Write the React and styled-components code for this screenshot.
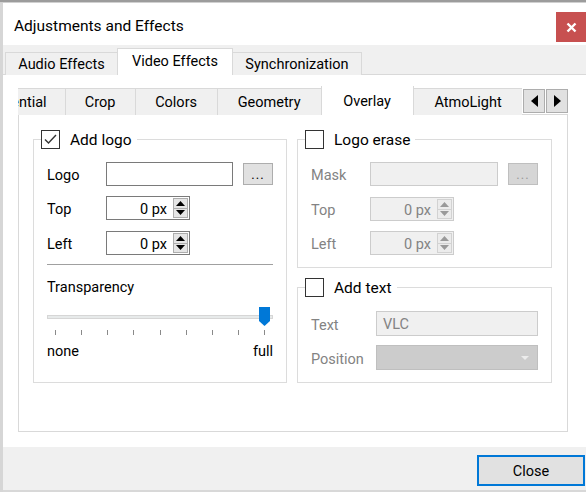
import styled, { createGlobalStyle } from "styled-components";

const FONT = `Roboto, "Open Sans", "Noto Sans", sans-serif`;

const GlobalStyle = createGlobalStyle`
  html, body {
    margin: 0;
    padding: 0;
    background: #f0f0f0;
  }
  body {
    font-family: ${FONT};
    font-size: 14.5px;
    color: #000;
  }
`;

const Page = styled.div`
  width: 586px;
  height: 492px;
  overflow: hidden;
  display: flex;
  flex-direction: column;
  background: #f0f0f0;
`;

const TopStrip = styled.div`
  height: 3px;
  flex: none;
  background: #9c9c9c;
  border-bottom: 1px solid #d0d0d0;
  box-sizing: border-box;
`;

const Window = styled.div`
  flex: 1;
  display: flex;
  flex-direction: column;
  border-left: 3px solid #d6d6d6;
  min-height: 0;
`;

const TitleBar = styled.div`
  height: 42px;
  flex: none;
  background: #fff;
  display: flex;
  align-items: flex-start;
`;

const Title = styled.div`
  font-size: 15.5px;
  padding: 11px 0 0 11px;
  line-height: 24px;
`;

const CloseX = styled.div`
  margin: 9px 0 0 auto;
  width: 30px;
  height: 30px;
  background: #c75050;
  display: flex;
  align-items: center;
  justify-content: center;
`;

const Body = styled.div`
  flex: 1;
  display: flex;
  flex-direction: column;
  background: #f0f0f0;
`;

const TabBar = styled.div`
  height: 30px;
  flex: none;
  display: flex;
  align-items: flex-end;
  padding-left: 3px;
`;

const Tab = styled.div`
  box-sizing: border-box;
  height: ${({ $active }) => ($active ? 27 : 23)}px;
  ${({ $w }) => ($w ? `width: ${$w}px;` : "padding: 0 18px;")}
  padding-top: ${({ $active }) => ($active ? 0 : 2)}px;
  display: flex;
  align-items: center;
  justify-content: center;
  line-height: 20px;
  background: ${({ $active }) => ($active ? "#fff" : "#f0f0f0")};
  border: 1px solid #d9d9d9;
  border-bottom: none;
  margin-left: -1px;
  position: relative;
  z-index: ${({ $active }) => ($active ? 1 : 0)};
  white-space: nowrap;
  flex: none;
`;

const TabPane = styled.div`
  height: 373px;
  box-sizing: border-box;
  background: #fff;
  border-top: 1px solid #d9d9d9;
  margin-top: -1px;
  padding: 11px 0 0 15px;
  display: flex;
  flex-direction: column;
`;

const InnerTabBar = styled.div`
  width: 550px;
  height: 29px;
  display: flex;
  align-items: flex-end;
`;

const TabScroller = styled.div`
  flex: 1;
  min-width: 0;
  overflow: hidden;
  height: 100%;
  display: flex;
  align-items: flex-end;
`;

const InnerTabRow = styled.div`
  display: flex;
  align-items: flex-end;
  margin-left: ${({ $offset }) => -$offset}px;
`;

const InnerTab = styled(Tab)`
  height: ${({ $active }) => ($active ? 30 : 27)}px;
  padding-top: 2px;
`;

const ArrowBtn = styled.div`
  width: 22px;
  height: 24px;
  box-sizing: border-box;
  margin: 0 0 2px 1px;
  background: #e1e1e1;
  border: 1px solid #adadad;
  display: flex;
  align-items: center;
  justify-content: center;
  flex: none;
`;

const InnerPane = styled.div`
  width: 550px;
  height: 318px;
  box-sizing: border-box;
  border: 1px solid #d9d9d9;
  margin-top: -1px;
  padding: 15px 15px 0 14px;
  display: grid;
  grid-template-columns: 254px 255px;
  column-gap: 10px;
  align-items: start;
`;

const Column = styled.div`
  display: flex;
  flex-direction: column;
  gap: 10px;
`;

const Group = styled.fieldset`
  margin: 0;
  padding: 0 13px;
  border: 1px solid #dcdcdc;
  min-width: 0;
  box-sizing: border-box;
  height: ${({ $h }) => $h}px;
`;

const Legend = styled.legend`
  padding: 0 5px 0 0;
  margin-left: -6px;
  display: flex;
  align-items: center;
  gap: 10px;
  height: 19px;
  line-height: 19px;
`;

const Box = styled.span`
  width: 19px;
  height: 19px;
  box-sizing: border-box;
  border: 1px solid #333;
  background: #fff;
  display: inline-flex;
  align-items: center;
  justify-content: center;
`;

const LegendText = styled.span`
  font-size: 15.5px;
  padding-top: 2px;
`;

const Content = styled.div`
  padding-top: ${({ $top }) => $top ?? 13}px;
  display: flex;
  flex-direction: column;
`;

const Row = styled.div`
  display: flex;
  align-items: center;
  height: ${({ $h }) => $h ?? 24}px;
  margin-bottom: ${({ $gap }) => $gap ?? 10}px;
`;

const Label = styled.span`
  width: ${({ $w }) => $w ?? 59}px;
  flex: none;
  padding-top: 3px;
  color: ${({ $disabled }) => ($disabled ? "#838383" : "#000")};
`;

const TextInput = styled.div`
  width: ${({ $w }) => $w}px;
  height: ${({ $h }) => $h ?? 24}px;
  box-sizing: border-box;
  border: 1px solid ${({ $disabled }) => ($disabled ? "#cccccc" : "#7a7a7a")};
  background: ${({ $disabled }) => ($disabled ? "#f0f0f0" : "#fff")};
  color: #838383;
  padding: 2px 0 0 6px;
  display: flex;
  align-items: center;
`;

const DotsBtn = styled.div`
  width: 30px;
  height: 22px;
  box-sizing: border-box;
  margin-left: 10px;
  background: ${({ $disabled }) => ($disabled ? "#d6d6d6" : "#e1e1e1")};
  border: 1px solid ${({ $disabled }) => ($disabled ? "#bfbfbf" : "#adadad")};
  color: ${({ $disabled }) => ($disabled ? "#9a9a9a" : "#000")};
  font-size: 13px;
  line-height: 14px;
  display: flex;
  align-items: center;
  justify-content: center;
  letter-spacing: 1px;
  padding-top: 2px;
`;

const Spin = styled.div`
  width: 84px;
  height: 24px;
  box-sizing: border-box;
  border: 1px solid ${({ $disabled }) => ($disabled ? "#cccccc" : "#7a7a7a")};
  background: ${({ $disabled }) => ($disabled ? "#f0f0f0" : "#fff")};
  color: ${({ $disabled }) => ($disabled ? "#838383" : "#000")};
  display: flex;
  align-items: center;
`;

const SpinValue = styled.span`
  flex: 1;
  text-align: right;
  padding: 3px 6px 0 0;
`;

const SpinButtons = styled.div`
  width: 15px;
  height: 20px;
  margin-right: 1px;
  display: flex;
  flex-direction: column;
`;

const SpinArrow = styled.div`
  flex: 1;
  box-sizing: border-box;
  border: 1px solid ${({ $disabled }) => ($disabled ? "#d2d2d2" : "#adadad")};
  background: ${({ $disabled }) => ($disabled ? "#ececec" : "#e5e5e5")};
  display: flex;
  align-items: center;
  justify-content: center;
  & + & {
    margin-top: -1px;
  }
`;

const Separator = styled.div`
  height: 1px;
  background: #a0a0a0;
  margin: -1px 0 13px;
`;

const Caption = styled.div`
  line-height: 20px;
`;

const SliderArea = styled.div`
  position: relative;
  height: 36px;
  margin-top: 5px;
`;

const Track = styled.div`
  position: absolute;
  left: 0;
  right: 0;
  top: 12px;
  height: 4px;
  box-sizing: border-box;
  background: #e7eaea;
  border: 1px solid #d6d6d6;
`;

const Thumb = styled.svg`
  position: absolute;
  top: 4px;
`;

const Ticks = styled.div`
  position: absolute;
  left: 8px;
  right: 8px;
  top: 27px;
  display: flex;
  justify-content: space-between;
`;

const Tick = styled.span`
  width: 1px;
  height: 5px;
  background: #8a8a8a;
`;

const Ends = styled.div`
  display: flex;
  justify-content: space-between;
  line-height: 20px;
  margin-top: 3px;
`;

const Combo = styled.div`
  width: 162px;
  height: 25px;
  box-sizing: border-box;
  background: #cccccc;
  border: 1px solid #bfbfbf;
  display: flex;
  align-items: center;
  justify-content: flex-end;
  padding-right: 8px;
`;

const Footer = styled.div`
  flex: 1;
  display: flex;
  justify-content: flex-end;
  align-items: flex-start;
  padding-top: 8px;
  border-bottom: 2px solid #d8d8d8;
`;

const CloseButton = styled.div`
  width: 108px;
  height: 31px;
  box-sizing: border-box;
  background: #e1e1e1;
  border: 2px solid #0078d7;
  display: flex;
  align-items: center;
  justify-content: center;
  padding-top: 2px;
  margin-right: 1px;
`;

const Check = () => (
  <svg width="15" height="15" viewBox="0 0 15 15">
    <polyline points="2,7.5 5.5,11 13,3" fill="none" stroke="#333" strokeWidth="1.4" />
  </svg>
);

const Tri = ({ dir, color = "#000", w = 7, h = 4 }) => (
  <svg width={w} height={h} viewBox={`0 0 ${w} ${h}`}>
    <polygon
      points={dir === "up" ? `0,${h} ${w / 2},0 ${w},${h}` : `0,0 ${w},0 ${w / 2},${h}`}
      fill={color}
    />
  </svg>
);

const SideTri = ({ dir }) => (
  <svg width="7" height="12" viewBox="0 0 7 12">
    <polygon points={dir === "left" ? "7,0 0,6 7,12" : "0,0 7,6 0,12"} fill="#000" />
  </svg>
);

function SpinBox({ disabled }) {
  const c = disabled ? "#9a9a9a" : "#000";
  return (
    <Spin $disabled={disabled}>
      <SpinValue>0 px</SpinValue>
      <SpinButtons>
        <SpinArrow $disabled={disabled}>
          <Tri dir="up" color={c} w={9} h={5} />
        </SpinArrow>
        <SpinArrow $disabled={disabled}>
          <Tri dir="down" color={c} w={9} h={5} />
        </SpinArrow>
      </SpinButtons>
    </Spin>
  );
}

function CheckGroup({ label, checked, height, children }) {
  return (
    <Group $h={height}>
      <Legend>
        <Box>{checked && <Check />}</Box>
        <LegendText>{label}</LegendText>
      </Legend>
      {children}
    </Group>
  );
}

const outerTabs = [
  { label: "Audio Effects", w: 113 },
  { label: "Video Effects", w: 116, active: true },
  { label: "Synchronization", w: 130 },
];

const innerTabs = [
  { label: "Essential" },
  { label: "Crop", w: 71 },
  { label: "Colors", w: 83 },
  { label: "Geometry", w: 105 },
  { label: "Overlay", w: 93, active: true },
  { label: "AtmoLight", w: 111 },
  { label: "Subtitles", w: 100 },
];

export default function App() {
  const value = 1;
  const ticks = Array.from({ length: 9 });
  return (
    <>
      <GlobalStyle />
      <Page>
        <TopStrip />
        <Window>
          <TitleBar>
            <Title>Adjustments and Effects</Title>
            <CloseX>
              <svg width="11" height="11" viewBox="0 0 11 11">
                <path d="M1.5 1.5 L9.5 9.5 M9.5 1.5 L1.5 9.5" stroke="#fff" strokeWidth="2.4" />
              </svg>
            </CloseX>
          </TitleBar>
          <Body>
            <TabBar>
              {outerTabs.map((t) => (
                <Tab key={t.label} $active={t.active} $w={t.w}>
                  {t.label}
                </Tab>
              ))}
            </TabBar>
            <TabPane>
              <InnerTabBar>
                <TabScroller>
                  <InnerTabRow $offset={48}>
                    {innerTabs.map((t) => (
                      <InnerTab key={t.label} $active={t.active} $w={t.w}>
                        {t.label}
                      </InnerTab>
                    ))}
                  </InnerTabRow>
                </TabScroller>
                <ArrowBtn>
                  <SideTri dir="left" />
                </ArrowBtn>
                <ArrowBtn>
                  <SideTri dir="right" />
                </ArrowBtn>
              </InnerTabBar>
              <InnerPane>
                <CheckGroup label="Add logo" checked height={253}>
                  <Content>
                    <Row>
                      <Label>Logo</Label>
                      <TextInput $w={127} />
                      <DotsBtn>...</DotsBtn>
                    </Row>
                    <Row $gap={11}>
                      <Label>Top</Label>
                      <SpinBox />
                    </Row>
                    <Row>
                      <Label>Left</Label>
                      <SpinBox />
                    </Row>
                    <Separator />
                    <Caption>Transparency</Caption>
                    <SliderArea>
                      <Track />
                      <Ticks>
                        {ticks.map((_, i) => (
                          <Tick key={i} />
                        ))}
                      </Ticks>
                      <Thumb
                        width="11"
                        height="19"
                        viewBox="0 0 11 19"
                        style={{ left: `calc(${value * 100}% - ${value * 11 + 3}px)` }}
                      >
                        <path d="M0 0 H11 V14 L5.5 19 L0 14 Z" fill="#0078d7" />
                      </Thumb>
                    </SliderArea>
                    <Ends>
                      <span>none</span>
                      <span>full</span>
                    </Ends>
                  </Content>
                </CheckGroup>
                <Column>
                  <CheckGroup label="Logo erase" height={138}>
                    <Content>
                      <Row $gap={11}>
                        <Label $disabled>Mask</Label>
                        <TextInput $w={128} $disabled />
                        <DotsBtn $disabled>...</DotsBtn>
                      </Row>
                      <Row>
                        <Label $disabled>Top</Label>
                        <SpinBox disabled />
                      </Row>
                      <Row>
                        <Label $disabled>Left</Label>
                        <SpinBox disabled />
                      </Row>
                    </Content>
                  </CheckGroup>
                  <CheckGroup label="Add text" height={105}>
                    <Content $top={14}>
                      <Row $h={25} $gap={9}>
                        <Label $w={65} $disabled>
                          Text
                        </Label>
                        <TextInput $w={162} $h={25} $disabled>
                          VLC
                        </TextInput>
                      </Row>
                      <Row $h={25}>
                        <Label $w={65} $disabled>
                          Position
                        </Label>
                        <Combo>
                          <Tri dir="down" color="#ececec" w={8} h={4} />
                        </Combo>
                      </Row>
                    </Content>
                  </CheckGroup>
                </Column>
              </InnerPane>
            </TabPane>
            <Footer>
              <CloseButton>Close</CloseButton>
            </Footer>
          </Body>
        </Window>
      </Page>
    </>
  );
}
